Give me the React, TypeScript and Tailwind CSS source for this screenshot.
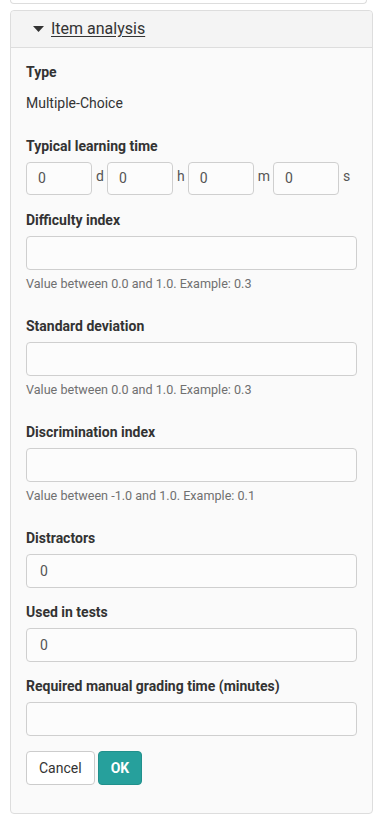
import React from 'react';

const font = { fontFamily: 'Roboto, "Liberation Sans", sans-serif' };

function Field({ label, value, help }: { label: string; value?: string; help?: string }) {
  return (
    <div className={help ? 'mb-[24px]' : 'mb-[14px]'}>
      <label className="block text-[14px] leading-[20px] font-bold text-[#333] mb-[6px]">{label}</label>
      <div className="h-[34px] w-full rounded-[4px] border border-[#cfcfcf] bg-[#fcfcfc] px-[13px] flex items-center text-[14px] text-[#555]">
        {value}
      </div>
      {help && <p className="mt-[5px] text-[12.6px] leading-[17px] text-[#707070]">{help}</p>}
    </div>
  );
}

function TimeBox({ unit }: { unit: string }) {
  return (
    <>
      <div className="h-[33px] w-[66px] rounded-[4px] border border-[#cfcfcf] bg-[#fcfcfc] pl-[11px] flex items-center text-[14px] text-[#555]">
        0
      </div>
      <span className="pl-[4px] pr-[3px] text-[14px] text-[#555] -mt-[4px]">{unit}</span>
    </>
  );
}

export default function App() {
  return (
    <main className="min-h-screen bg-white pb-[5px]" style={font}>
      <div className="mx-[10px] h-[4px] border-x border-b border-[#ddd] rounded-b-[4px]" />

      <section className="mx-[10px] mt-[6px] w-[363px] rounded-[4px] border border-[#ddd] bg-[#fafafa]">
        <header className="h-[37px] border-b border-[#ddd] bg-[#f4f4f4] rounded-t-[4px] flex items-center pl-[22px]">
          <svg width="11" height="6" viewBox="0 0 11 6" className="mr-[7px]">
            <path d="M0 0h11L5.5 6z" fill="#333" />
          </svg>
          <span className="text-[16px] text-[#333] underline underline-offset-[2px]">Item analysis</span>
        </header>

        <div className="px-[15px] pt-[14px] pb-[28px]">
          <label className="block text-[14px] leading-[20px] font-bold text-[#333]">Type</label>
          <p className="mt-[11px] text-[14px] leading-[20px] text-[#333] mb-[23px]">Multiple-Choice</p>

          <div className="mb-[15px]">
            <label className="block text-[14px] leading-[20px] font-bold text-[#333] mb-[6px]">Typical learning time</label>
            <div className="flex items-center">
              <TimeBox unit="d" />
              <TimeBox unit="h" />
              <TimeBox unit="m" />
              <TimeBox unit="s" />
            </div>
          </div>

          <Field label="Difficulty index" help="Value between 0.0 and 1.0. Example: 0.3" />
          <Field label="Standard deviation" help="Value between 0.0 and 1.0. Example: 0.3" />
          <Field label="Discrimination index" help="Value between -1.0 and 1.0. Example: 0.1" />
          <Field label="Distractors" value="0" />
          <Field label="Used in tests" value="0" />
          <Field label="Required manual grading time (minutes)" />

          <div className="flex gap-[3px] pt-[1px]">
            <button className="h-[34px] px-[12px] rounded-[4px] border border-[#ccc] bg-white text-[14px] text-[#333]">
              Cancel
            </button>
            <button className="h-[34px] px-[12px] rounded-[4px] border border-[#21908c] bg-[#26a09c] text-[14px] font-bold text-white">
              OK
            </button>
          </div>
        </div>
      </section>
    </main>
  );
}
